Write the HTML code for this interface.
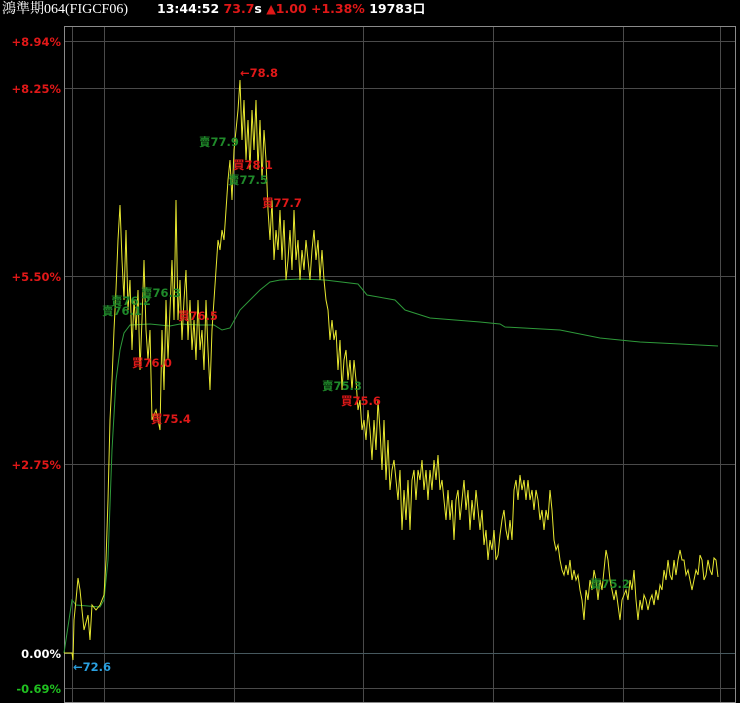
<!DOCTYPE html>
<html><head><meta charset="utf-8"><style>
html,body{margin:0;padding:0;background:#000;width:740px;height:703px;overflow:hidden}
svg{position:absolute;left:0;top:0}
text{font-family:"DejaVu Sans","Noto Sans CJK TC",sans-serif;font-weight:bold}
</style></head><body>
<svg width="740" height="703" viewBox="0 0 740 703">
<text x="2" y="13" fill="#fff" font-size="14" style="font-family:'Liberation Serif','Noto Serif CJK SC',serif;font-weight:normal">鴻準期064(FIGCF06)</text>
<text x="157" y="13" font-size="12.5"><tspan fill="#fff">13:44:52 </tspan><tspan fill="#e01818">73.7</tspan><tspan fill="#fff">s </tspan><tspan fill="#e01818">▲1.00 +1.38% </tspan><tspan fill="#fff">19783口</tspan></text>
<g stroke="#4a4a4a" stroke-width="1">
<line x1="64" y1="41.5" x2="736" y2="41.5"/><line x1="64" y1="88.5" x2="736" y2="88.5"/>
<line x1="64" y1="276.5" x2="736" y2="276.5"/><line x1="64" y1="464.5" x2="736" y2="464.5"/>
<line x1="64" y1="688.5" x2="736" y2="688.5"/>
<line x1="72.5" y1="27" x2="72.5" y2="702"/><line x1="104.5" y1="27" x2="104.5" y2="702"/>
<line x1="234.5" y1="27" x2="234.5" y2="702"/><line x1="363.5" y1="27" x2="363.5" y2="702"/>
<line x1="493.5" y1="27" x2="493.5" y2="702"/><line x1="623.5" y1="27" x2="623.5" y2="702"/>
<line x1="720.5" y1="27" x2="720.5" y2="702"/>
</g>
<line x1="64" y1="653.5" x2="736" y2="653.5" stroke="#46585e"/>
<rect x="64.5" y="26.5" width="671" height="676" fill="none" stroke="#8a8a8a"/>
<g font-size="11.5" text-anchor="end">
<text x="61" y="46" fill="#e01818">+8.94%</text><text x="61" y="93" fill="#e01818">+8.25%</text>
<text x="61" y="281" fill="#e01818">+5.50%</text><text x="61" y="469" fill="#e01818">+2.75%</text>
<text x="61" y="658" fill="#fff">0.00%</text><text x="61" y="693" fill="#20c020">-0.69%</text>
</g>
<polyline fill="none" stroke="#2e9a3a" stroke-width="1" points="64,653 72,600 76,605 100,607 104,600 108,560 112,450 116,380 120,350 124,333 130,325 150,324 170,326 180,324 200,325 214,325 222,330 230,328 240,310 250,300 260,290 270,282 280,280 300,279 325,280 358,284 367,295 395,300 405,310 430,318 480,322 500,324 505,327 560,330 600,338 640,342 680,344 718,346"/>
<polyline fill="none" stroke="#e8e830" stroke-width="1" points="64,653 72,653 73,660 74,620 76,600 78,578 80,590 84,630 88,615 90,640 92,605 96,610 100,605 104,595 106,560 108,500 110,420 112,380 114,330 116,290 118,240 120,205 122,260 124,300 126,230 128,310 130,280 132,350 134,300 136,330 138,290 140,370 142,320 144,260 146,330 148,360 150,330 152,420 156,410 160,430 162,330 164,390 166,300 168,360 170,310 172,260 174,320 176,200 178,320 180,280 182,340 184,300 186,270 188,340 190,300 192,350 194,320 196,360 198,300 200,350 202,330 204,370 206,300 208,350 210,390 212,330 214,300 216,270 218,240 220,250 222,230 224,240 226,210 228,180 230,160 232,200 234,150 236,130 238,110 240,80 242,140 244,100 246,160 248,120 250,170 252,110 254,150 256,100 258,170 260,120 262,180 264,130 266,160 268,210 270,240 272,200 274,260 276,230 278,250 280,210 282,260 284,220 286,280 288,260 290,230 292,270 294,210 296,260 298,240 300,280 302,250 304,270 306,240 308,260 310,280 312,250 314,230 316,260 318,240 320,280 322,250 324,280 326,300 328,310 330,340 332,320 334,340 336,330 338,370 340,340 342,390 344,360 346,350 348,380 350,360 352,390 354,360 356,380 358,410 360,400 362,430 364,420 366,440 368,410 370,430 372,460 374,420 376,450 378,400 380,430 382,470 384,420 386,480 388,440 390,490 392,470 394,460 396,480 398,500 400,470 402,530 404,490 406,520 408,480 410,530 412,480 414,470 416,500 418,470 420,480 422,460 424,490 426,470 428,500 430,470 432,490 434,460 436,480 438,455 440,490 442,480 444,500 446,520 448,490 450,520 452,500 454,540 456,500 458,490 460,520 462,500 464,480 466,510 468,490 470,530 472,500 474,520 476,490 478,510 480,530 482,510 484,545 486,530 488,560 490,540 492,550 494,530 496,560 498,555 500,535 502,520 504,510 506,530 508,540 510,520 512,540 514,490 516,480 518,500 520,475 522,490 524,480 526,500 528,480 530,500 532,490 534,510 536,490 538,500 540,520 542,510 544,530 546,510 548,520 550,490 552,510 554,540 556,550 558,545 560,560 562,570 564,575 566,565 568,575 570,560 572,580 574,570 576,580 578,575 580,590 582,600 584,620 586,590 588,600 590,580 592,590 594,570 596,580 598,600 600,580 602,590 604,570 606,550 608,560 610,580 612,590 614,600 616,590 618,605 620,620 622,600 624,595 626,590 628,600 630,580 632,590 634,570 636,600 638,620 640,600 642,610 644,595 646,600 648,610 650,600 652,595 654,605 656,590 658,600 660,585 662,590 664,570 666,580 668,560 670,575 672,580 674,560 676,575 678,560 680,550 682,560 684,560 686,575 688,570 690,580 692,590 694,580 696,570 698,575 700,555 702,560 704,580 706,575 708,560 710,570 712,575 714,558 716,560 718,577"/>
<g font-size="11.5">
<text x="240" y="77" fill="#e01818">←78.8</text>
<text x="73" y="671" fill="#2aa0e0">←72.6</text>
<text x="199" y="146" fill="#1f8a2a">賣77.9</text>
<text x="233" y="169" fill="#e01818">買78.1</text>
<text x="228" y="184" fill="#1f8a2a">賣77.5</text>
<text x="262" y="207" fill="#e01818">買77.7</text>
<text x="141" y="297" fill="#1f8a2a">賣76.3</text>
<text x="111" y="305" fill="#1f8a2a">賣76.2</text>
<text x="102" y="315" fill="#1f8a2a">賣76.1</text>
<text x="178" y="320" fill="#e01818">買76.5</text>
<text x="132" y="367" fill="#e01818">買76.0</text>
<text x="151" y="423" fill="#e01818">買75.4</text>
<text x="322" y="390" fill="#1f8a2a">賣75.3</text>
<text x="341" y="405" fill="#e01818">買75.6</text>
<text x="590" y="588" fill="#1f8a2a">賣75.2</text>
</g>
</svg>
</body></html>
